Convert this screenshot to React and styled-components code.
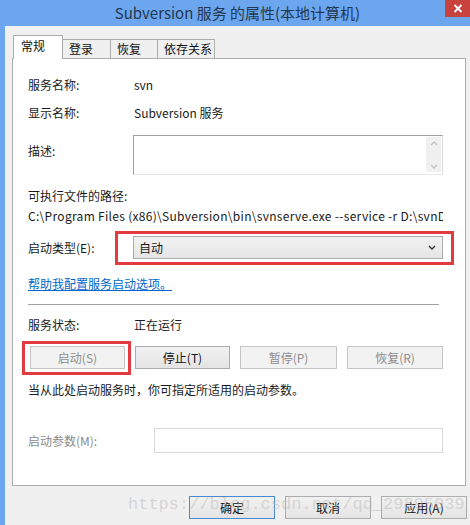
import React from 'react';
import styled, { createGlobalStyle } from 'styled-components';

const FONT = '"Noto Sans CJK SC", "Noto Sans", sans-serif';

const GlobalStyle = createGlobalStyle`
  html, body {
    margin: 0;
    padding: 0;
    background: #f0f0f0;
  }
  body {
    font-family: ${FONT};
    font-size: 12px;
    color: #1a1a1a;
  }
`;

const Window = styled.div`
  position: relative;
  width: 470px;
  height: 525px;
  box-sizing: border-box;
  border-left: 5px solid #6ba6ef;
  background: #f0f0f0;
  display: flex;
  flex-direction: column;
  overflow: hidden;
`;

const TitleBar = styled.div`
  height: 26px;
  flex: none;
  background: #6ba6ef;
  display: grid;
  grid-template-columns: 1fr auto 1fr;
  align-items: start;
`;

const Title = styled.div`
  grid-column: 2;
  font-size: 15px;
  line-height: 25px;
  color: #23384f;
  white-space: nowrap;
`;

const CloseBtn = styled.div`
  grid-column: 3;
  justify-self: end;
  width: 25px;
  height: 17px;
  background: #c8433d;
  display: flex;
  align-items: center;
  justify-content: center;
`;

const Body = styled.div`
  flex: 1;
  padding: 9px 0 0 7px;
  display: flex;
  flex-direction: column;
`;

const Tabs = styled.div`
  display: flex;
  align-items: flex-end;
  padding-left: 1px;
  position: relative;
  z-index: 1;
  margin-bottom: -1px;
`;

const Tab = styled.div`
  box-sizing: border-box;
  width: ${p => p.w}px;
  height: ${p => (p.active ? 24 : 20)}px;
  margin-left: ${p => (p.first ? 0 : -1)}px;
  border: 1px solid #adadad;
  border-bottom: ${p => (p.active ? 'none' : '1px solid #adadad')};
  background: ${p => (p.active ? '#ffffff' : '#f0f0f0')};
  padding-left: ${p => (p.active ? 7 : 6)}px;
  line-height: ${p => (p.active ? 20 : 18)}px;
  font-size: 12px;
  color: #111;
  z-index: ${p => (p.active ? 2 : 1)};
`;

const Panel = styled.div`
  box-sizing: border-box;
  width: 454px;
  height: 428px;
  background: #ffffff;
  border: 1px solid #adadad;
  padding: 16px 22px 0 15px;
  display: flex;
  flex-direction: column;
`;

const Field = styled.div`
  display: grid;
  grid-template-columns: ${p => p.labelWidth || 105}px 1fr;
  align-items: ${p => p.align || 'center'};
  min-height: 20px;
  margin-top: ${p => p.mt || 0}px;
`;

const Label = styled.div`
  line-height: 20px;
  color: ${p => (p.disabled ? '#8a8a8a' : '#1a1a1a')};
  padding-top: ${p => p.pt || 0}px;
  white-space: nowrap;
`;

const Value = styled.div`
  line-height: 20px;
  padding-left: 1px;
  white-space: nowrap;
`;

const Line = styled.div`
  line-height: 20px;
  margin-top: ${p => p.mt || 0}px;
  letter-spacing: ${p => p.ls || 0}px;
  white-space: nowrap;
  overflow: hidden;
`;

const TextArea = styled.div`
  box-sizing: border-box;
  height: 40px;
  border: 1px solid #a0a0a0;
  border-right-color: #dcdcdc;
  border-bottom-color: #e6e6e6;
  background: #fff;
  display: flex;
  justify-content: flex-end;
  padding: 1px 1px 2px 0;
`;

const ScrollBar = styled.div`
  width: 15px;
  background: #f0f0f0;
  display: flex;
  flex-direction: column;
  align-items: center;
  justify-content: space-between;
  padding: 4px 0 3px;
  box-sizing: border-box;
`;

const Highlighted = styled.div`
  position: relative;
`;

const RedBox = styled.div`
  position: absolute;
  top: ${p => p.t}px;
  left: ${p => p.l}px;
  right: ${p => p.r}px;
  bottom: ${p => p.b}px;
  border: 3px solid #e23a3f;
  pointer-events: none;
`;

const Select = styled.div`
  box-sizing: border-box;
  height: 23px;
  border: 1px solid #acacac;
  background: linear-gradient(#f2f2f2, #e5e5e5);
  display: flex;
  align-items: center;
  justify-content: space-between;
  padding: 0 6px 0 5px;
  line-height: 20px;
`;

const HelpLink = styled.a`
  display: block;
  margin-top: 15px;
  line-height: 20px;
  color: #0066cc;
  text-decoration: underline;
  width: max-content;
`;

const Separator = styled.div`
  height: 1px;
  background: #a0a0a0;
  margin: 10px 4px 0 0;
`;

const ButtonRow = styled.div`
  display: flex;
  gap: 10px;
  margin-top: 11px;
  padding-left: 2px;
`;

const Button = styled.div`
  box-sizing: border-box;
  width: ${p => p.w || 95}px;
  height: 23px;
  border: 1px solid ${p => (p.disabled ? '#c5c5c5' : p.primary ? '#4a8bd0' : '#acacac')};
  background: ${p => (p.disabled ? '#f2f2f2' : 'linear-gradient(#f1f1f1, #e4e4e4)')};
  color: ${p => (p.disabled ? '#8d8d8d' : '#111')};
  display: flex;
  align-items: center;
  justify-content: center;
  font-size: 12px;
  line-height: 20px;
  white-space: nowrap;
`;

const ParamInput = styled.div`
  box-sizing: border-box;
  height: 25px;
  border: 1px solid #d9d9d9;
  background: #fff;
`;

const Footer = styled.div`
  display: flex;
  justify-content: flex-end;
  gap: 10px;
  padding: 10px 3px 0 0;
`;

const Watermark = styled.div`
  position: absolute;
  left: 123px;
  top: 493px;
  font-family: "Liberation Mono", monospace;
  font-size: 17px;
  line-height: 24px;
  color: rgba(180, 180, 180, 0.45);
  white-space: nowrap;
  pointer-events: none;
`;

const Chevron = ({ up, color = '#333', w = 8 }) => (
  <svg width={w} height="5" viewBox="0 0 8 5">
    <path
      d={up ? 'M1 4 L4 1 L7 4' : 'M1 1 L4 4 L7 1'}
      fill="none"
      stroke={color}
      strokeWidth="1.4"
    />
  </svg>
);

export default function App() {
  return (
    <>
      <GlobalStyle />
      <Window>
        <TitleBar>
          <Title>Subversion 服务 的属性(本地计算机)</Title>
          <CloseBtn>
            <svg width="10" height="9" viewBox="0 0 10 9">
              <path d="M1.5 1 L8.5 8 M8.5 1 L1.5 8" stroke="#fff" strokeWidth="1.8" />
            </svg>
          </CloseBtn>
        </TitleBar>
        <Body>
          <Tabs>
            <Tab active first w={50}>常规</Tab>
            <Tab w={49}>登录</Tab>
            <Tab w={48}>恢复</Tab>
            <Tab w={58}>依存关系</Tab>
          </Tabs>
          <Panel>
            <Field>
              <Label>服务名称:</Label>
              <Value>svn</Value>
            </Field>
            <Field mt={8}>
              <Label>显示名称:</Label>
              <Value>Subversion 服务</Value>
            </Field>
            <Field mt={12} align="start">
              <Label pt={6}>描述:</Label>
              <TextArea>
                <ScrollBar>
                  <Chevron up color="#c4c4c4" />
                  <Chevron color="#c4c4c4" />
                </ScrollBar>
              </TextArea>
            </Field>
            <Line mt={11}>可执行文件的路径:</Line>
            <Line ls={0.3}>C:\Program Files (x86)\Subversion\bin\svnserve.exe --service -r D:\svnData</Line>
            <Field mt={10}>
              <Label>启动类型(E):</Label>
              <Highlighted>
                <Select>
                  <span>自动</span>
                  <Chevron />
                </Select>
                <RedBox t={-5} l={-18} r={-11} b={-6} />
              </Highlighted>
            </Field>
            <HelpLink>帮助我配置服务启动选项。</HelpLink>
            <Separator />
            <Field mt={10}>
              <Label>服务状态:</Label>
              <Value>正在运行</Value>
            </Field>
            <ButtonRow>
              <Highlighted>
                <Button disabled>启动(S)</Button>
                <RedBox t={-5} l={-8} r={-6} b={-6} />
              </Highlighted>
              <Button>停止(T)</Button>
              <Button disabled w={97}>暂停(P)</Button>
              <Button disabled w={96}>恢复(R)</Button>
            </ButtonRow>
            <Line mt={11}>当从此处启动服务时，你可指定所适用的启动参数。</Line>
            <Field mt={28} labelWidth={126}>
              <Label disabled>启动参数(M):</Label>
              <ParamInput />
            </Field>
          </Panel>
          <Footer>
            <Button primary w={86}>确定</Button>
            <Button w={86}>取消</Button>
            <Button w={86}>应用(A)</Button>
          </Footer>
        </Body>
        <Watermark>https://blog.csdn.net/qq_29895039</Watermark>
      </Window>
    </>
  );
}
